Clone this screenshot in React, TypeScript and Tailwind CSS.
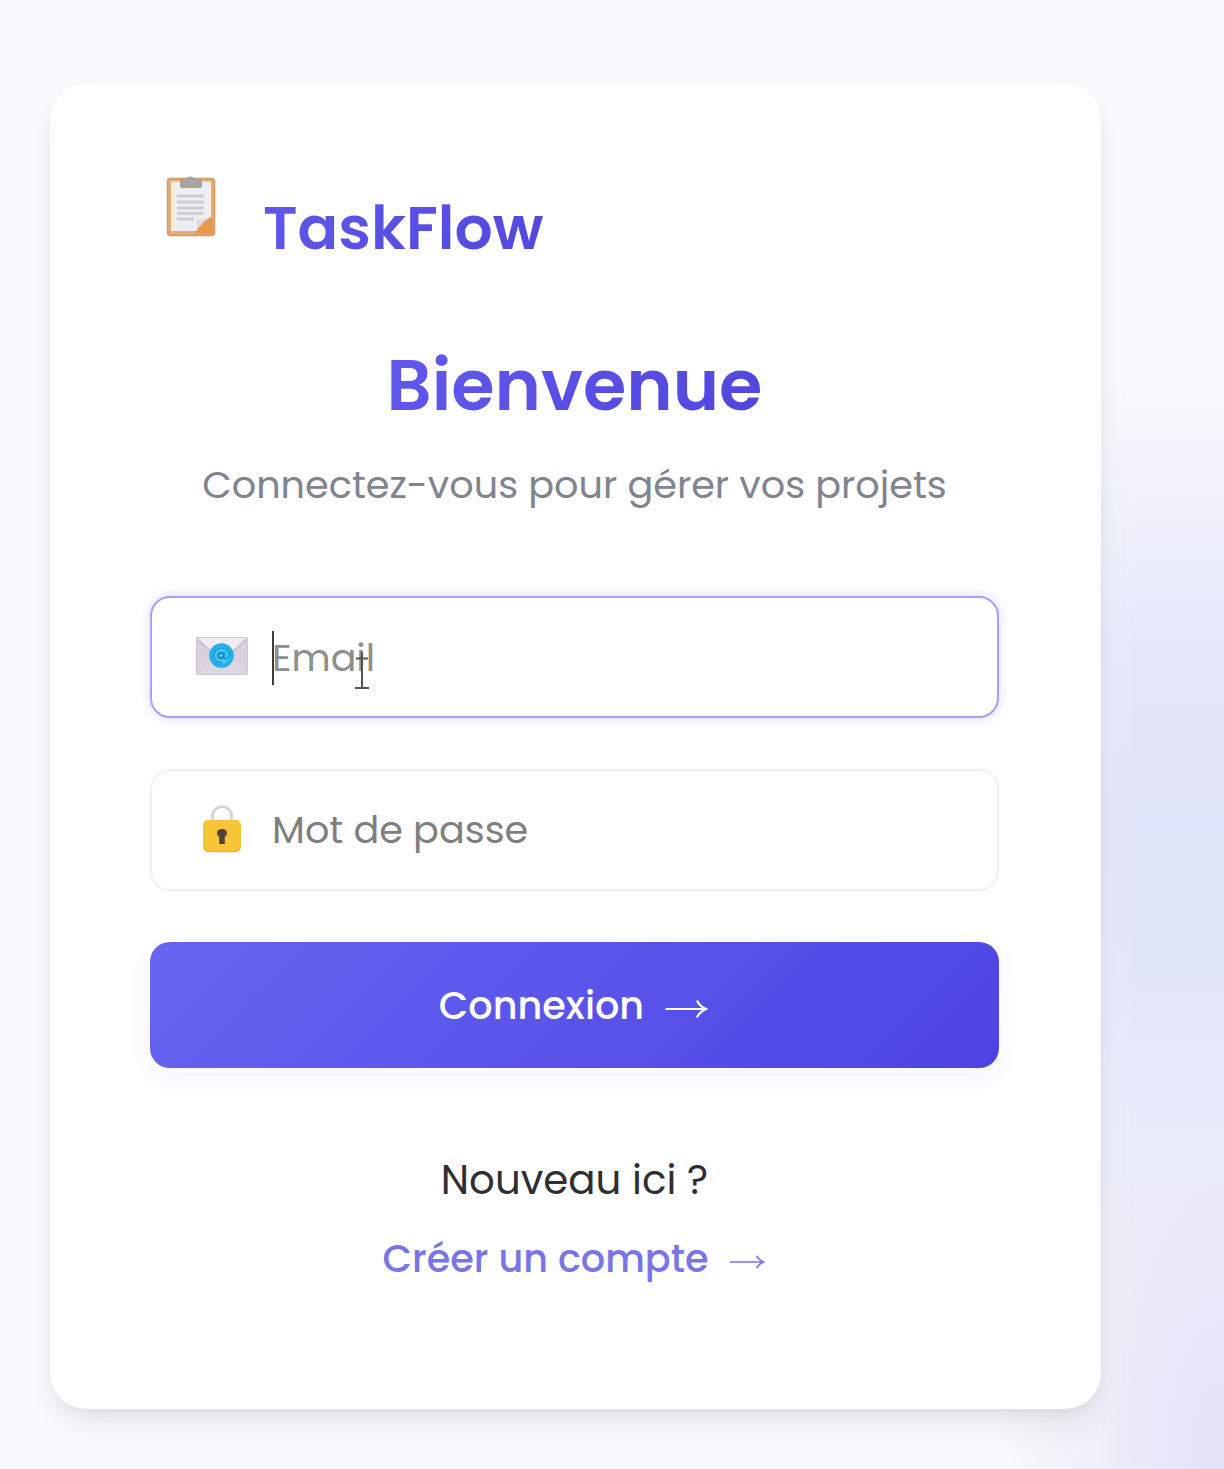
function ClipboardIcon() {
  return (
    <svg width="50" height="62" viewBox="0 0 50 62" fill="none" aria-hidden="true">
      <rect x="1.5" y="2.500" width="47" height="57" rx="3" fill="#e3ab78" />
      <rect x="1.5" y="2.500" width="47" height="57" rx="3" stroke="#d49a68" strokeWidth="1.5" />
      <path d="M5 5.500h40v38L31 55H5z" fill="#f8ece4" />
      <path d="M9 8h34v35L30 55H9z" fill="#eeeef6" />
      <path d="M29 57c4-3 3-9 2-12 4 1 10 0 13-4l3 2v15H29z" fill="#e89a4a" />
      <path d="M30 55c2-4 3-7 1-12 4 1 9 0 12-3z" fill="#dddce8" />
      <path d="M14 3h6c1-3.500 8-3.500 9 0h7v7c0 1-1 2-2 2H16c-1 0-2-1-2-2z" fill="#a8a39d" />
      <path d="M11 20h27M11 26h27M11 32h27M11 37.500h26M11 43h17" stroke="#cdcdd1" strokeWidth="3" />
    </svg>
  );
}

function EnvelopeIcon() {
  return (
    <svg width="54" height="40" viewBox="0 0 54 40" fill="none" aria-hidden="true">
      <rect x="1" y="1" width="52" height="38" rx="2" fill="#d9d1dd" />
      <path d="M2 38 20 19h14l18 19z" fill="#ddd6e3" />
      <path d="M3 2h48L30 22c-2 1.500-4 1.500-6 0z" fill="#f0edf5" />
      <path d="M2 3 22 21M52 3 32 21" stroke="#c6bdcc" strokeWidth="1.500" />
      <rect x="1.500" y="1.500" width="51" height="37" rx="2" stroke="#cdc5d2" />
      <circle cx="26.500" cy="19.500" r="12.300" fill="#1fb0ea" />
      <circle cx="26.500" cy="19.500" r="8.500" fill="#45c8f5" />
      <circle cx="26" cy="19.500" r="2.800" stroke="#1c86c8" strokeWidth="2" />
      <path d="M29.500 16v5c0 3 4.500 2 4.500-2 0-4.500-3.500-7-7.500-7s-7.500 3-7.500 7.500 4 7.500 8 7.500" stroke="#1c9bd8" strokeWidth="1.600" />
    </svg>
  );
}

function LockIcon() {
  return (
    <svg width="40" height="50" viewBox="0 0 40 50" fill="none" aria-hidden="true">
      <path d="M10.500 18v-6c0-12.500 19-12.500 19 0v6" stroke="#d3d3d6" strokeWidth="2.800" />
      <rect x="1" y="16" width="38" height="32" rx="5" fill="#f8c539" />
      <path d="M2.500 44c1.500 3 4 3.500 6 3.500h23c3 0 5-1 6-3.500" stroke="#f0b52f" strokeWidth="1.500" />
      <path d="M20 25c3 0 5 1.500 5 4 0 2-1 3-2.200 3.600V40h-5.600v-7.400C16 32 15 31 15 29c0-2.500 2-4 5-4z" fill="#54423a" />
    </svg>
  );
}

function TextCursor() {
  return (
    <svg width="16" height="48" viewBox="0 0 16 48" fill="none" aria-hidden="true">
      <path d="M8 9v36M1 45h14M2 15.500h12" stroke="#555" strokeWidth="2" />
    </svg>
  );
}

function ButtonArrow() {
  return (
    <svg width="43" height="20" viewBox="0 0 43 20" fill="none" stroke="currentColor" strokeWidth="2.100" aria-hidden="true">
      <path d="M.5 10H40M32 1.500c1.500 3.500 4.500 6.500 9 8.500-4.500 2-7.500 5-9 8.500" />
    </svg>
  );
}

function LinkArrow() {
  return (
    <svg width="35" height="16" viewBox="0 0 35 16" fill="none" stroke="currentColor" strokeWidth="1.700" aria-hidden="true">
      <path d="M0 8h33M26.500 1.800c1.500 2.700 3.500 4.700 7 6.200-3.500 1.500-5.500 3.500-7 6.200" />
    </svg>
  );
}

export default function App() {
  return (
    <main className="relative h-[1469px] w-[1224px] overflow-hidden bg-[#f8fafc] pt-[83px] pl-[50px] font-[Poppins,sans-serif] text-[38.2px]">
      <div className="absolute top-[370px] right-0 h-[1099px] w-[260px] bg-[linear-gradient(to_bottom,#f8fafc_0%,#eff2fc_12%,#e5e8fa_25%,#e0e4fa_41%,#e2e6fa_55%,#e8ebfa_68%,#ebecf9_82%,#ebecf9_100%)] [mask-image:linear-gradient(to_right,transparent_15%,black_65%)]" />
      <div className="absolute right-0 bottom-0 h-[300px] w-[120px] bg-[radial-gradient(ellipse_at_bottom_right,#e2e3f8_0%,transparent_70%)]" />
      <section className="relative flex h-[1326px] w-[1051px] flex-col rounded-[36px] bg-[#fefefe] pt-[93px] pr-[102px] pl-[100px] shadow-[0_20px_40px_-8px_rgba(0,0,0,0.08),0_6px_16px_-3px_rgba(0,0,0,0.07)]">
        <header className="flex h-[96px] items-start">
          <span className="ml-[16px]">
            <ClipboardIcon />
          </span>
          <span className="mt-[16px] ml-[47px] bg-linear-135 from-[#6158ea] to-[#5248dc] bg-clip-text text-[60px] leading-[72px] font-semibold text-transparent">
            TaskFlow
          </span>
        </header>
        <h1 className="mt-[62px] text-center text-[70.200px] leading-[104px] font-semibold">
          <span className="bg-linear-135 from-[#6459ef] to-[#5046dc] bg-clip-text text-transparent">Bienvenue</span>
        </h1>
        <p className="mt-[18px] text-center leading-[58px] text-[#7f848e]">Connectez-vous pour gérer vos projets</p>
        <form className="mt-[82px] flex flex-col gap-[51px]">
          <div className="flex h-[122px] items-center rounded-[20px] border-2 border-[#a89ef3] pl-[43px] text-[#8e8e8e] shadow-[0_0_8px_1px_rgba(129,110,250,0.22)]">
            <span className="mt-[-2px]">
              <EnvelopeIcon />
            </span>
            <span className="relative ml-[23px] text-[38px]">
              Email
              <span className="absolute top-[2px] left-0 h-[54px] w-[2px] bg-[#3c3c3c]" />
              <span className="absolute top-[14px] left-[82px]">
                <TextCursor />
              </span>
            </span>
          </div>
          <div className="flex h-[122px] items-center rounded-[20px] border-2 border-[#f1f1f2] pl-[50px] text-[#7f7f7f]">
            <span className="mt-[-2px]">
              <LockIcon />
            </span>
            <span className="ml-[30px]">Mot de passe</span>
          </div>
          <button
            type="button"
            className="flex h-[126px] items-center justify-center gap-[21px] rounded-[20px] bg-linear-135 from-[#6865f0] via-[#5a54eb] to-[#4d43e2] pr-[2px] font-medium text-white shadow-[0_8px_24px_rgba(99,102,241,0.05)]"
          >
            <span className="mt-[1px]">Connexion</span>
            <span className="mt-[7px]">
              <ButtonArrow />
            </span>
          </button>
        </form>
        <p className="mt-[83px] text-center text-[40.300px] leading-[58px] text-[#2f2f33]">Nouveau ici ?</p>
        <a className="mt-[21px] flex items-center justify-center gap-[21px] pr-[2px] leading-[58px] font-medium text-[#7a75e6]">
          <span>Créer un compte</span>
          <span className="mt-[5px]">
            <LinkArrow />
          </span>
        </a>
      </section>
    </main>
  );
}
